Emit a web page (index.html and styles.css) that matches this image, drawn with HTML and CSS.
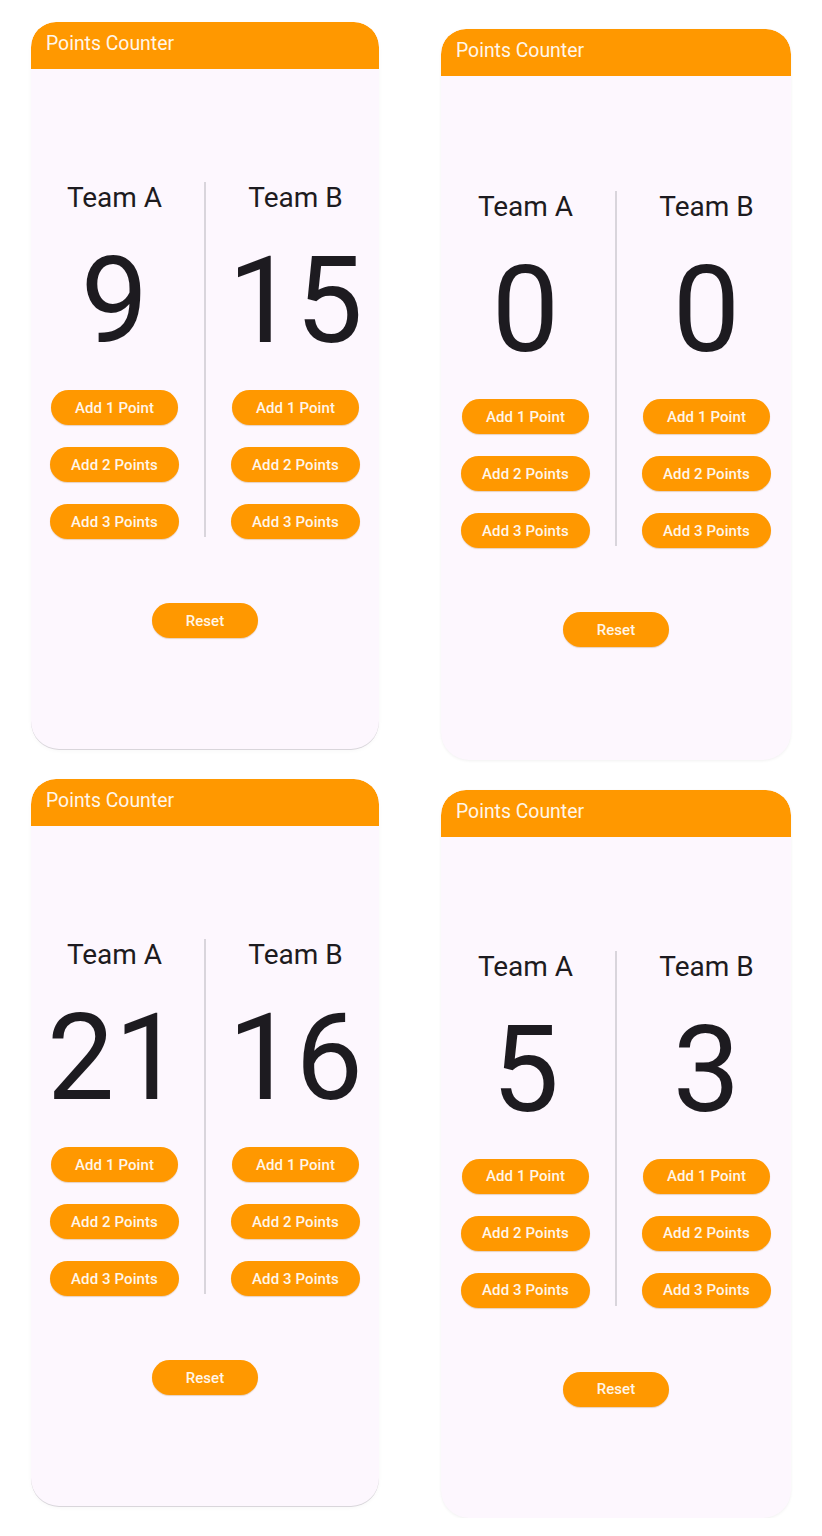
FILE: index.html
```html
<!DOCTYPE html>
<html lang="en">
<head>
<meta charset="utf-8">
<title>Points Counter</title>
<link rel="stylesheet" href="styles.css">
</head>
<body>
<main class="board">
  <section class="stack stack--left">
    <article class="card card--a card--lined">
      <header class="appbar">Points Counter</header>
      <div class="body">
        <div class="teams">
          <div class="team">
            <div class="team-name">Team A</div>
            <div class="score">9</div>
            <button class="btn">Add 1 Point</button>
            <button class="btn">Add 2 Points</button>
            <button class="btn">Add 3 Points</button>
          </div>
          <div class="divider"></div>
          <div class="team">
            <div class="team-name">Team B</div>
            <div class="score">15</div>
            <button class="btn">Add 1 Point</button>
            <button class="btn">Add 2 Points</button>
            <button class="btn">Add 3 Points</button>
          </div>
        </div>
        <button class="btn btn--reset">Reset</button>
      </div>
    </article>
    <article class="card card--a card--lined">
      <header class="appbar">Points Counter</header>
      <div class="body">
        <div class="teams">
          <div class="team">
            <div class="team-name">Team A</div>
            <div class="score">21</div>
            <button class="btn">Add 1 Point</button>
            <button class="btn">Add 2 Points</button>
            <button class="btn">Add 3 Points</button>
          </div>
          <div class="divider"></div>
          <div class="team">
            <div class="team-name">Team B</div>
            <div class="score">16</div>
            <button class="btn">Add 1 Point</button>
            <button class="btn">Add 2 Points</button>
            <button class="btn">Add 3 Points</button>
          </div>
        </div>
        <button class="btn btn--reset">Reset</button>
      </div>
    </article>
  </section>
  <section class="stack stack--right">
    <article class="card card--b">
      <header class="appbar">Points Counter</header>
      <div class="body">
        <div class="teams">
          <div class="team">
            <div class="team-name">Team A</div>
            <div class="score">0</div>
            <button class="btn">Add 1 Point</button>
            <button class="btn">Add 2 Points</button>
            <button class="btn">Add 3 Points</button>
          </div>
          <div class="divider"></div>
          <div class="team">
            <div class="team-name">Team B</div>
            <div class="score">0</div>
            <button class="btn">Add 1 Point</button>
            <button class="btn">Add 2 Points</button>
            <button class="btn">Add 3 Points</button>
          </div>
        </div>
        <button class="btn btn--reset">Reset</button>
      </div>
    </article>
    <article class="card card--c">
      <header class="appbar">Points Counter</header>
      <div class="body">
        <div class="teams">
          <div class="team">
            <div class="team-name">Team A</div>
            <div class="score">5</div>
            <button class="btn">Add 1 Point</button>
            <button class="btn">Add 2 Points</button>
            <button class="btn">Add 3 Points</button>
          </div>
          <div class="divider"></div>
          <div class="team">
            <div class="team-name">Team B</div>
            <div class="score">3</div>
            <button class="btn">Add 1 Point</button>
            <button class="btn">Add 2 Points</button>
            <button class="btn">Add 3 Points</button>
          </div>
        </div>
        <button class="btn btn--reset">Reset</button>
      </div>
    </article>
  </section>
</main>
</body>
</html>
```

FILE: styles.css
```css
html, body {
  margin: 0;
  padding: 0;
  background: #ffffff;
}

body {
  font-family: Roboto, "Liberation Sans", sans-serif;
  color: #1d1b20;
}

.board {
  display: flex;
  align-items: flex-start;
  padding-left: 31px;
  gap: 62px;
}

.stack {
  display: flex;
  flex-direction: column;
  gap: 30px;
}

.stack--left {
  width: 348px;
  padding-top: 22px;
}

.stack--right {
  width: 350px;
  padding-top: 29px;
}

.card {
  display: flex;
  flex-direction: column;
  background: #fdf7fe;
  border-radius: 25px 25px 28px 28px;
  box-shadow: 0 1px 3px rgba(0, 0, 0, 0.06);
  overflow: hidden;
}

.card--lined {
  box-shadow: 0 1px 0 #d9d6db, 0 2px 4px rgba(0, 0, 0, 0.03);
}

.card--a { height: 727px; }
.card--b { height: 731px; }
.card--c { height: 728px; }

.appbar {
  flex: 0 0 47px;
  box-sizing: border-box;
  background: #ff9800;
  color: #fff6ea;
  font-size: 19.4px;
  line-height: 22px;
  padding: 11px 0 0 15px;
  border-radius: 25px 25px 0 0;
}

.body {
  flex: 1;
  display: flex;
  flex-direction: column;
  align-items: center;
  justify-content: center;
}

.teams {
  display: flex;
  align-items: stretch;
}

.team {
  width: 165px;
  display: flex;
  flex-direction: column;
  align-items: center;
}

.divider {
  width: 2px;
  margin: 2px 7px;
  background: #d9d5dc;
}

.team-name {
  font-size: 28px;
  line-height: 36px;
}

.score {
  font-size: 120px;
  line-height: 120px;
  margin-top: 25px;
  margin-bottom: 29px;
}

.btn {
  font-family: Roboto, "Liberation Sans", sans-serif;
  font-weight: 500;
  font-size: 15px;
  letter-spacing: 0.1px;
  color: #fff6ea;
  background: #ff9800;
  border: none;
  border-radius: 18px;
  height: 35px;
  min-width: 127px;
  padding: 0 21px;
  box-shadow: 0 1px 1px rgba(160, 90, 0, 0.25);
}

.btn + .btn {
  margin-top: 22px;
}

.btn--reset {
  margin-top: 64px;
  min-width: 0;
  width: 106px;
  padding: 0;
}
```
